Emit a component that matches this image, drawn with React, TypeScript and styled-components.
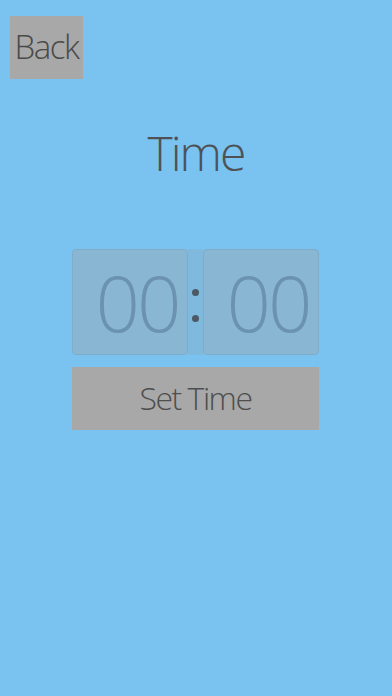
import React from "react";
import styled, { createGlobalStyle } from "styled-components";

const Global = createGlobalStyle`
  html, body { margin: 0; padding: 0; background: #7ac3f0; }
  body { font-family: "Open Sans", "DejaVu Sans", sans-serif; }
`;

const Page = styled.div`
  width: 392px;
  height: 696px;
  background: #7ac3f0;
  display: flex;
  flex-direction: column;
  box-sizing: border-box;
  padding-top: 16px;
`;

const BackButton = styled.button`
  margin-left: 10px;
  width: 73px;
  height: 63px;
  border: none;
  padding: 0 0 2px;
  background: #a8a8a8;
  color: #4a4a4a;
  font-family: inherit;
  font-size: 33px;
  font-weight: 300;
  letter-spacing: -1.5px;
  display: flex;
  align-items: center;
  justify-content: center;
`;

const Title = styled.h1`
  margin: 46px 0 0;
  text-align: center;
  font-size: 48px;
  font-weight: 300;
  letter-spacing: -2px;
  color: #4e5257;
  line-height: 56px;
`;

const Clock = styled.div`
  margin: 68px 0 0 72px;
  display: flex;
  width: 247px;
  height: 106px;
`;

const DigitBox = styled.div`
  width: 116px;
  height: 106px;
  box-sizing: border-box;
  border: 1px solid #7fadc8;
  border-radius: 4px;
  background: #89b6d2;
  display: flex;
  align-items: center;
  justify-content: center;
  color: #6b93b0;
  font-size: 78px;
  font-weight: 300;
  letter-spacing: -3px;
  padding: 0 0 0 14px;
`;

const Colon = styled.div`
  width: 15px;
  background: #7fb9de;
  display: flex;
  flex-direction: column;
  align-items: center;
  justify-content: center;
  gap: 19px;
  padding-top: 6px;
`;

const Dot = styled.span`
  width: 7px;
  height: 7px;
  border-radius: 50%;
  background: #4c5863;
`;

const SetButton = styled.button`
  margin: 12px 0 0 72px;
  width: 247px;
  height: 63px;
  border: none;
  padding: 0 0 2px;
  background: #a8a8a8;
  color: #4e4e4e;
  font-family: inherit;
  font-size: 32px;
  font-weight: 300;
  letter-spacing: -1.5px;
`;

export default function App() {
  return (
    <>
      <Global />
      <Page>
        <BackButton>Back</BackButton>
        <Title>Time</Title>
        <Clock>
          <DigitBox>00</DigitBox>
          <Colon>
            <Dot />
            <Dot />
          </Colon>
          <DigitBox>00</DigitBox>
        </Clock>
        <SetButton>Set Time</SetButton>
      </Page>
    </>
  );
}
